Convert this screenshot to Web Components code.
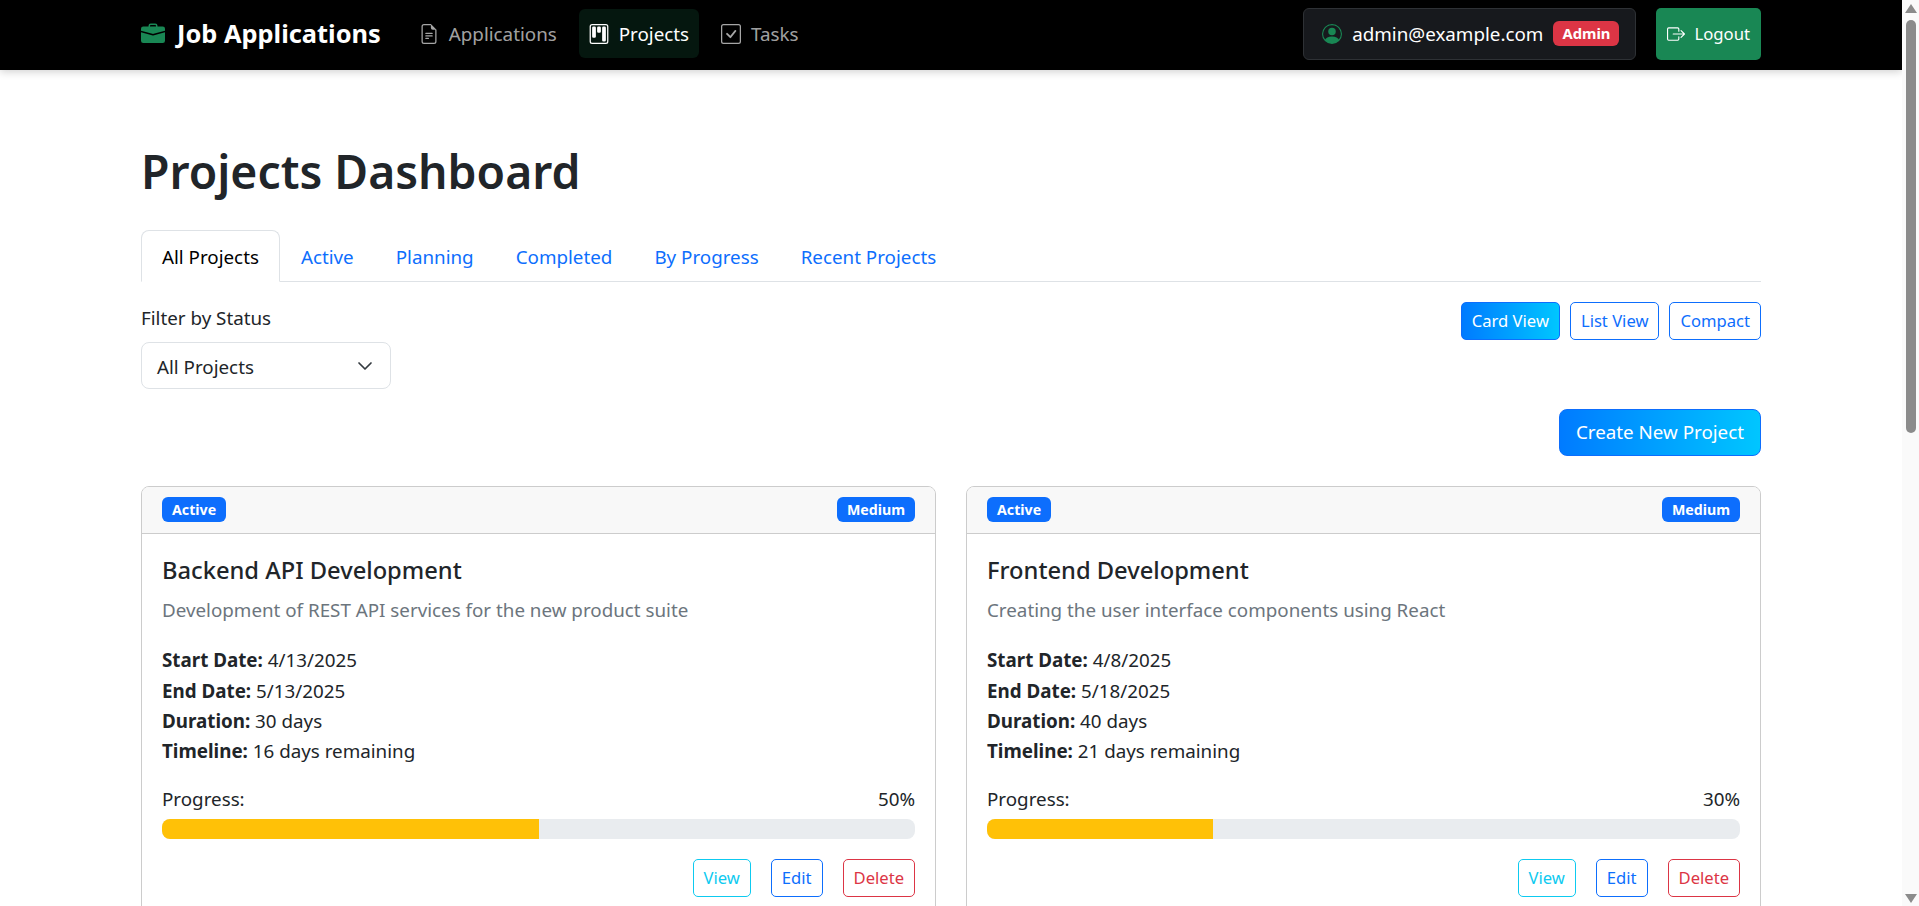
<!DOCTYPE html>
<html lang="en">
<head>
<meta charset="utf-8">
<title>Projects Dashboard</title>
<style>
  html, body { margin: 0; height: 100%; overflow: hidden; background: #fff; }
  body { font-family: "Noto Sans", "Open Sans", sans-serif; font-size: 18.8px; line-height: 30.6px; color: #212529; }
</style>
</head>
<body>
<app-shell>
  <app-navbar></app-navbar>
  <page-title>Projects Dashboard</page-title>
  <page-tabs></page-tabs>
  <filter-row></filter-row>
  <create-row></create-row>
  <card-grid>
    <project-card status="Active" priority="Medium" name="Backend API Development"
      desc="Development of REST API services for the new product suite"
      start="4/13/2025" end="5/13/2025" duration="30 days" timeline="16 days remaining" progress="50"></project-card>
    <project-card status="Active" priority="Medium" name="Frontend Development"
      desc="Creating the user interface components using React"
      start="4/8/2025" end="5/18/2025" duration="40 days" timeline="21 days remaining" progress="30"></project-card>
  </card-grid>
</app-shell>

<script>
const ICONS = {
  briefcase: '<path d="M6.5 1A1.5 1.5 0 0 0 5 2.5V3H1.5A1.5 1.5 0 0 0 0 4.5v1.384l7.614 2.03a1.5 1.5 0 0 0 .772 0L16 5.884V4.5A1.5 1.5 0 0 0 14.5 3H11v-.5A1.5 1.5 0 0 0 9.5 1h-3zm0 1h3a.5.5 0 0 1 .5.5V3H6v-.5a.5.5 0 0 1 .5-.5z"/><path d="M0 12.5A1.5 1.5 0 0 0 1.5 14h13a1.5 1.5 0 0 0 1.5-1.5V6.85L8.129 8.947a.5.5 0 0 1-.258 0L0 6.85v5.65z"/>',
  file: '<path d="M5.5 7a.5.5 0 0 0 0 1h5a.5.5 0 0 0 0-1h-5zM5 9.5a.5.5 0 0 1 .5-.5h5a.5.5 0 0 1 0 1h-5a.5.5 0 0 1-.5-.5zm0 2a.5.5 0 0 1 .5-.5h2a.5.5 0 0 1 0 1h-2a.5.5 0 0 1-.5-.5z"/><path d="M9.5 0H4a2 2 0 0 0-2 2v12a2 2 0 0 0 2 2h8a2 2 0 0 0 2-2V4.5L9.5 0zm0 1v2A1.5 1.5 0 0 0 11 4.5h2V14a1 1 0 0 1-1 1H4a1 1 0 0 1-1-1V2a1 1 0 0 1 1-1h5.5z"/>',
  kanban: '<path d="M13.5 1a1 1 0 0 1 1 1v12a1 1 0 0 1-1 1h-11a1 1 0 0 1-1-1V2a1 1 0 0 1 1-1h11zm-11-1a2 2 0 0 0-2 2v12a2 2 0 0 0 2 2h11a2 2 0 0 0 2-2V2a2 2 0 0 0-2-2h-11z"/><path d="M6.5 3a1 1 0 0 1 1-1h1a1 1 0 0 1 1 1v3a1 1 0 0 1-1 1h-1a1 1 0 0 1-1-1V3zm-4 0a1 1 0 0 1 1-1h1a1 1 0 0 1 1 1v7a1 1 0 0 1-1 1h-1a1 1 0 0 1-1-1V3zm8 0a1 1 0 0 1 1-1h1a1 1 0 0 1 1 1v10a1 1 0 0 1-1 1h-1a1 1 0 0 1-1-1V3z"/>',
  check: '<path d="M14 1a1 1 0 0 1 1 1v12a1 1 0 0 1-1 1H2a1 1 0 0 1-1-1V2a1 1 0 0 1 1-1h12zM2 0a2 2 0 0 0-2 2v12a2 2 0 0 0 2 2h12a2 2 0 0 0 2-2V2a2 2 0 0 0-2-2H2z"/><path d="M10.97 4.97a.75.75 0 0 1 1.071 1.05l-3.992 4.99a.75.75 0 0 1-1.08.02L4.324 8.384a.75.75 0 1 1 1.06-1.06l2.094 2.093 3.473-4.425a.235.235 0 0 1 .02-.022z"/>',
  person: '<path d="M11 6a3 3 0 1 1-6 0 3 3 0 0 1 6 0z"/><path fill-rule="evenodd" d="M0 8a8 8 0 1 1 16 0A8 8 0 0 1 0 8zm8-7a7 7 0 0 0-5.468 11.37C3.242 11.226 4.805 10 8 10s4.757 1.225 5.468 2.37A7 7 0 0 0 8 1z"/>',
  logout: '<path fill-rule="evenodd" d="M10 12.5a.5.5 0 0 1-.5.5h-8a.5.5 0 0 1-.5-.5v-9a.5.5 0 0 1 .5-.5h8a.5.5 0 0 1 .5.5v2a.5.5 0 0 0 1 0v-2A1.5 1.5 0 0 0 9.5 2h-8A1.5 1.5 0 0 0 0 3.5v9A1.5 1.5 0 0 0 1.5 14h8a1.5 1.5 0 0 0 1.5-1.5v-2a.5.5 0 0 0-1 0v2z"/><path fill-rule="evenodd" d="M15.854 8.354a.5.5 0 0 0 0-.708l-3-3a.5.5 0 0 0-.708.708L14.293 7.5H5.5a.5.5 0 0 0 0 1h8.793l-2.147 2.146a.5.5 0 0 0 .708.708l3-3z"/>'
};

const icon = (name, size) =>
  `<svg width="${size}" height="${size}" viewBox="0 0 16 16" fill="currentColor" aria-hidden="true">${ICONS[name]}</svg>`;

// Base for the small elements: markup + styles in an open shadow root
class Base extends HTMLElement {
  constructor() {
    super();
    this.attachShadow({ mode: 'open' });
  }
  connectedCallback() {
    this.shadowRoot.innerHTML = this.render();
  }
}

class AppShell extends Base {
  render() {
    return `
      <style>
        :host { display: flex; height: 906px; overflow: hidden; }
        .page { flex: 1; min-width: 0; overflow: hidden; }
        .content { padding: 0 141px; }
        .bar { width: 17px; flex: none; background: #fafafa; display: flex; flex-direction: column; align-items: center; }
        .thumb { width: 10px; height: 413px; margin-top: 7px; background: #8b8b8b; border-radius: 5px; }
        .up, .down { width: 0; height: 0; border-left: 6px solid transparent; border-right: 6px solid transparent; }
        .up { margin-top: 4px; border-bottom: 9px solid #8b8b8b; }
        .down { margin-top: auto; margin-bottom: 3px; border-top: 9px solid #8b8b8b; }
      </style>
      <div class="page">
        <slot name="nav"></slot>
        <div class="content"><slot></slot></div>
      </div>
      <div class="bar"><div class="up"></div><div class="thumb"></div><div class="down"></div></div>
    `;
  }
  connectedCallback() {
    super.connectedCallback();
    this.querySelector('app-navbar').slot = 'nav';
  }
}

class NavLink extends Base {
  render() {
    const active = this.hasAttribute('active');
    return `
      <style>
        :host { display: block; }
        a { display: flex; align-items: center; gap: 10px; height: 49px; box-sizing: border-box; padding: 2px 10px 0; border-radius: 6px;
            color: ${active ? '#fff' : 'rgba(255,255,255,.65)'}; background: ${active ? '#05170f' : 'transparent'}; }
        svg { flex: none; margin-top: -2px; }
      </style>
      <a>${icon(this.getAttribute('icon'), 20)}<slot></slot></a>
    `;
  }
}

class AppNavbar extends Base {
  render() {
    return `
      <style>
        :host { display: flex; align-items: center; height: 70px; box-sizing: border-box; padding: 0 141px 3px; background: #000;
                box-shadow: 0 2px 8px rgba(0,0,0,.18); position: relative; color: #fff; }
        .brand { display: flex; align-items: center; gap: 12px; font-size: 25.4px; font-weight: 700; margin-right: 28px; }
        .brand svg { color: #198754; }
        .links { display: flex; gap: 12px; }
        .right { margin-left: auto; display: flex; align-items: center; gap: 20px; }
        .user { display: flex; align-items: center; height: 52px; box-sizing: border-box; padding: 2px 16px 0 18px; gap: 10px;
                background: #17191d; border: 1px solid #2e3135; border-radius: 6px; }
        .user svg { color: #198754; margin-top: -2px; }
        .role { font-size: 14.8px; font-weight: 700; line-height: 25px; padding: 0 9px; background: #dc3545; border-radius: 6px; margin-top: -2px; }
        .logout { display: flex; align-items: center; gap: 9px; height: 52px; box-sizing: border-box; padding: 2px 11px 0; background: #198754; border-radius: 5px; font-size: 16.7px; }
        .logout svg { margin-top: -2px; }
      </style>
      <div class="brand">${icon('briefcase', 24)}<span>Job Applications</span></div>
      <div class="links">
        <nav-link icon="file">Applications</nav-link>
        <nav-link icon="kanban" active>Projects</nav-link>
        <nav-link icon="check">Tasks</nav-link>
      </div>
      <div class="right">
        <div class="user">${icon('person', 20)}<span>admin@example.com</span><span class="role">Admin</span></div>
        <div class="logout">${icon('logout', 18)}<span>Logout</span></div>
      </div>
    `;
  }
}

class PageTitle extends Base {
  render() {
    return `
      <style>
        :host { display: block; margin-top: 73px; font-size: 46.3px; line-height: 58px; font-weight: 600; }
      </style>
      <slot></slot>
    `;
  }
}

class PageTabs extends Base {
  render() {
    const tabs = ['Active', 'Planning', 'Completed', 'By Progress', 'Recent Projects'];
    return `
      <style>
        :host { display: flex; margin-top: 29px; height: 52px; box-sizing: border-box; border-bottom: 1px solid #dee2e6; }
        span { display: block; padding: 0 20px; line-height: 52px; height: 51px; color: #0d6efd; box-sizing: border-box; border: 1px solid transparent; }
        .on { color: #000; background: #fff; border-color: #dee2e6 #dee2e6 #fff; border-radius: 8px 8px 0 0; height: 52px; }
      </style>
      <span class="on">All Projects</span>
      ${tabs.map(t => `<span>${t}</span>`).join('')}
    `;
  }
}

class FilterRow extends Base {
  render() {
    return `
      <style>
        :host { display: flex; justify-content: space-between; align-items: flex-start; margin-top: 21px; }
        .label { margin-bottom: 8px; }
        .select { display: flex; align-items: center; justify-content: space-between; width: 250px; height: 47px; box-sizing: border-box;
                  padding: 4px 17px 0 15px; border: 1px solid #dee2e6; border-radius: 8px; }
        svg { margin-top: -3px; }
        .toggle { display: flex; gap: 10px; margin-top: -1px; }
        .btn { height: 38px; line-height: 36px; box-sizing: border-box; padding: 0 10px; font-size: 16.6px; border: 1px solid #0d6efd; border-radius: 5px; color: #0d6efd; }
        .on { background: linear-gradient(90deg, #007bff, #00c6ff); color: #fff; }
      </style>
      <div>
        <div class="label">Filter by Status</div>
        <div class="select"><span>All Projects</span>
          <svg width="16" height="16" viewBox="0 0 16 16" fill="none" stroke="#343a40" stroke-linecap="round" stroke-linejoin="round" stroke-width="1.7"><path d="m2 5 6 6 6-6"/></svg>
        </div>
      </div>
      <div class="toggle">
        <span class="btn on">Card View</span><span class="btn">List View</span><span class="btn">Compact</span>
      </div>
    `;
  }
}

class CreateRow extends Base {
  render() {
    return `
      <style>
        :host { display: flex; justify-content: flex-end; margin-top: 20px; }
        span { height: 47px; line-height: 45px; box-sizing: border-box; padding: 0 16px; color: #fff; border: 1px solid #0d6efd; border-radius: 8px;
               background: linear-gradient(90deg, #007bff, #00c6ff); }
      </style>
      <span>Create New Project</span>
    `;
  }
}

class CardGrid extends Base {
  render() {
    return `
      <style>
        :host { display: grid; grid-template-columns: 1fr 1fr; gap: 30px; margin-top: 30px; }
      </style>
      <slot></slot>
    `;
  }
}

class ProjectCard extends Base {
  render() {
    const a = n => this.getAttribute(n);
    const row = (k, v) => `<div><b>${k}:</b> ${v}</div>`;
    return `
      <style>
        :host { display: block; border: 1px solid #ccc; border-radius: 8px; overflow: hidden; }
        header { display: flex; justify-content: space-between; align-items: center; height: 47px; box-sizing: border-box; padding: 0 20px;
                 background: #f8f8f8; border-bottom: 1px solid #ccc; }
        .badge { font-size: 14.2px; font-weight: 700; line-height: 25px; padding: 0 10px; color: #fff; background: #0d6efd; border-radius: 6px; }
        .body { padding: 18px 20px 20px; }
        h5 { margin: 0; font-size: 23.7px; line-height: 36px; font-weight: 500; }
        p { margin: 7px 0 0; color: #6c757d; }
        .rows { margin-top: 20px; line-height: 30.4px; }
        .label { display: flex; justify-content: space-between; margin-top: 17px; }
        .track { height: 20px; background: #e9ecef; border-radius: 8px; overflow: hidden; margin-top: 5px; }
        .fill { height: 100%; background: #ffc107; }
        .actions { display: flex; justify-content: flex-end; gap: 20px; margin-top: 20px; font-size: 16.6px; }
        .actions span { height: 38px; line-height: 36px; box-sizing: border-box; padding: 0 10px; border: 1px solid; border-radius: 5px; }
      </style>
      <header><span class="badge">${a('status')}</span><span class="badge">${a('priority')}</span></header>
      <div class="body">
        <h5>${a('name')}</h5>
        <p>${a('desc')}</p>
        <div class="rows">
          ${row('Start Date', a('start'))}
          ${row('End Date', a('end'))}
          ${row('Duration', a('duration'))}
          ${row('Timeline', a('timeline'))}
        </div>
        <div class="label"><span>Progress:</span><span>${a('progress')}%</span></div>
        <div class="track"><div class="fill" style="width:${a('progress')}%"></div></div>
        <div class="actions">
          <span style="color:#0dcaf0">View</span><span style="color:#0d6efd">Edit</span><span style="color:#dc3545">Delete</span>
        </div>
      </div>
    `;
  }
}

customElements.define('nav-link', NavLink);
customElements.define('app-navbar', AppNavbar);
customElements.define('page-title', PageTitle);
customElements.define('page-tabs', PageTabs);
customElements.define('filter-row', FilterRow);
customElements.define('create-row', CreateRow);
customElements.define('card-grid', CardGrid);
customElements.define('project-card', ProjectCard);
customElements.define('app-shell', AppShell);
</script>
</body>
</html>
